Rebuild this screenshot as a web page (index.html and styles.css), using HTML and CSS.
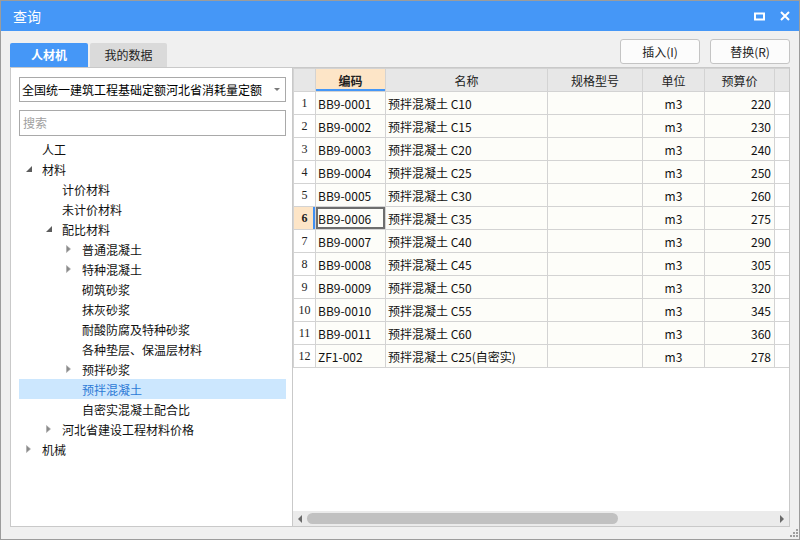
FILE: index.html
```html
<!DOCTYPE html>
<html lang="zh">
<head>
<meta charset="utf-8">
<title>查询</title>
<link rel="stylesheet" href="styles.css">
</head>
<body>
<div class="window">
  <div class="titlebar">
    <span class="title">查询</span>
    <div class="controls">
      <svg class="ic-max" width="11" height="9" viewBox="0 0 11 9"><rect x="1" y="1.5" width="9" height="6" fill="none" stroke="#fff" stroke-width="2"/></svg>
      <svg class="ic-close" width="10" height="10" viewBox="0 0 10 10"><path d="M1 1L9 9M9 1L1 9" stroke="#fff" stroke-width="2"/></svg>
    </div>
  </div>
  <div class="body">
    <div class="toolbar">
      <div class="tabs">
        <div class="tab active">人材机</div>
        <div class="tab">我的数据</div>
      </div>
      <div class="actions">
        <button class="btn">插入(I)</button>
        <button class="btn">替换(R)</button>
      </div>
    </div>
    <div class="main">
      <div class="left">
        <div class="select">
          <span class="select-text">全国统一建筑工程基础定额河北省消耗量定额</span>
          <svg class="select-arrow" width="6" height="3" viewBox="0 0 6 3"><path d="M0 0H6L3 3Z" fill="#7a7a7a"/></svg>
        </div>
        <div class="search">搜索</div>
        <ul class="tree">
          <li class="node lv0"><span class="tw"></span><span class="label">人工</span></li>
          <li class="node lv0"><span class="tw"><svg width="6" height="6" viewBox="0 0 6 6"><path d="M6 0V6H0Z" fill="#5c5c5c"/></svg></span><span class="label">材料</span></li>
          <li class="node lv1"><span class="tw"></span><span class="label">计价材料</span></li>
          <li class="node lv1"><span class="tw"></span><span class="label">未计价材料</span></li>
          <li class="node lv1"><span class="tw"><svg width="6" height="6" viewBox="0 0 6 6"><path d="M6 0V6H0Z" fill="#5c5c5c"/></svg></span><span class="label">配比材料</span></li>
          <li class="node lv2"><span class="tw"><svg width="5" height="8" viewBox="0 0 5 8"><path d="M0.5 0.5L4.5 4L0.5 7.5Z" fill="#8a8a8a" stroke="#a8a8a8" stroke-width="0.6"/></svg></span><span class="label">普通混凝土</span></li>
          <li class="node lv2"><span class="tw"><svg width="5" height="8" viewBox="0 0 5 8"><path d="M0.5 0.5L4.5 4L0.5 7.5Z" fill="#8a8a8a" stroke="#a8a8a8" stroke-width="0.6"/></svg></span><span class="label">特种混凝土</span></li>
          <li class="node lv2"><span class="tw"></span><span class="label">砌筑砂浆</span></li>
          <li class="node lv2"><span class="tw"></span><span class="label">抹灰砂浆</span></li>
          <li class="node lv2"><span class="tw"></span><span class="label">耐酸防腐及特种砂浆</span></li>
          <li class="node lv2"><span class="tw"></span><span class="label">各种垫层、保温层材料</span></li>
          <li class="node lv2"><span class="tw"><svg width="5" height="8" viewBox="0 0 5 8"><path d="M0.5 0.5L4.5 4L0.5 7.5Z" fill="#8a8a8a" stroke="#a8a8a8" stroke-width="0.6"/></svg></span><span class="label">预拌砂浆</span></li>
          <li class="node lv2 selected"><span class="tw"></span><span class="label">预拌混凝土</span></li>
          <li class="node lv2"><span class="tw"></span><span class="label">自密实混凝土配合比</span></li>
          <li class="node lv1"><span class="tw"><svg width="5" height="8" viewBox="0 0 5 8"><path d="M0.5 0.5L4.5 4L0.5 7.5Z" fill="#8a8a8a" stroke="#a8a8a8" stroke-width="0.6"/></svg></span><span class="label">河北省建设工程材料价格</span></li>
          <li class="node lv0"><span class="tw"><svg width="5" height="8" viewBox="0 0 5 8"><path d="M0.5 0.5L4.5 4L0.5 7.5Z" fill="#8a8a8a" stroke="#a8a8a8" stroke-width="0.6"/></svg></span><span class="label">机械</span></li>
        </ul>
      </div>
      <div class="right">
        <div class="grid-wrap">
          <table class="grid">
            <colgroup>
              <col class="c-no"><col class="c-code"><col class="c-name"><col class="c-spec"><col class="c-unit"><col class="c-price"><col class="c-extra">
            </colgroup>
            <thead>
              <tr>
                <th></th><th class="sorted">编码</th><th>名称</th><th>规格型号</th><th>单位</th><th>预算价</th><th></th>
              </tr>
            </thead>
            <tbody>
              <tr><td class="no">1</td><td class="code">BB9-0001</td><td class="name">预拌混凝土 C10</td><td></td><td class="unit">m3</td><td class="price">220</td><td class="extra"></td></tr>
              <tr><td class="no">2</td><td class="code">BB9-0002</td><td class="name">预拌混凝土 C15</td><td></td><td class="unit">m3</td><td class="price">230</td><td class="extra"></td></tr>
              <tr><td class="no">3</td><td class="code">BB9-0003</td><td class="name">预拌混凝土 C20</td><td></td><td class="unit">m3</td><td class="price">240</td><td class="extra"></td></tr>
              <tr><td class="no">4</td><td class="code">BB9-0004</td><td class="name">预拌混凝土 C25</td><td></td><td class="unit">m3</td><td class="price">250</td><td class="extra"></td></tr>
              <tr><td class="no">5</td><td class="code">BB9-0005</td><td class="name">预拌混凝土 C30</td><td></td><td class="unit">m3</td><td class="price">260</td><td class="extra"></td></tr>
              <tr class="current"><td class="no">6</td><td class="code active-cell">BB9-0006</td><td class="name">预拌混凝土 C35</td><td></td><td class="unit">m3</td><td class="price">275</td><td class="extra"></td></tr>
              <tr><td class="no">7</td><td class="code">BB9-0007</td><td class="name">预拌混凝土 C40</td><td></td><td class="unit">m3</td><td class="price">290</td><td class="extra"></td></tr>
              <tr><td class="no">8</td><td class="code">BB9-0008</td><td class="name">预拌混凝土 C45</td><td></td><td class="unit">m3</td><td class="price">305</td><td class="extra"></td></tr>
              <tr><td class="no">9</td><td class="code">BB9-0009</td><td class="name">预拌混凝土 C50</td><td></td><td class="unit">m3</td><td class="price">320</td><td class="extra"></td></tr>
              <tr><td class="no">10</td><td class="code">BB9-0010</td><td class="name">预拌混凝土 C55</td><td></td><td class="unit">m3</td><td class="price">345</td><td class="extra"></td></tr>
              <tr><td class="no">11</td><td class="code">BB9-0011</td><td class="name">预拌混凝土 C60</td><td></td><td class="unit">m3</td><td class="price">360</td><td class="extra"></td></tr>
              <tr><td class="no">12</td><td class="code">ZF1-002</td><td class="name">预拌混凝土 C25(自密实)</td><td></td><td class="unit">m3</td><td class="price">278</td><td class="extra"></td></tr>
            </tbody>
          </table>
        </div>
        <div class="hscroll">
          <span class="sarrow"><svg width="4" height="8" viewBox="0 0 4 8"><path d="M4 0V8L0 4Z" fill="#6a6a6a"/></svg></span>
          <div class="track"><div class="thumb"></div></div>
          <span class="sarrow"><svg width="4" height="8" viewBox="0 0 4 8"><path d="M0 0V8L4 4Z" fill="#6a6a6a"/></svg></span>
        </div>
      </div>
    </div>
    <div class="footer">
      <svg class="grip" width="8" height="8" viewBox="0 0 8 8" fill="#a0a0a0">
        <rect x="6" y="0" width="2" height="2"/>
        <rect x="3" y="3" width="2" height="2"/><rect x="6" y="3" width="2" height="2"/>
        <rect x="0" y="6" width="2" height="2"/><rect x="3" y="6" width="2" height="2"/><rect x="6" y="6" width="2" height="2"/>
      </svg>
    </div>
  </div>
</div>
</body>
</html>
```

FILE: styles.css
```css
* { box-sizing: border-box; }
html, body { margin: 0; padding: 0; }
body {
  font-family: "Noto Sans CJK SC", "Noto Sans", sans-serif;
  font-size: 12px;
  color: #1a1a1a;
  background: #f0f0f0;
}
.window {
  width: 800px;
  height: 540px;
  border: 1px solid #9c9c9c;
  background: #f0f0f0;
  display: flex;
  flex-direction: column;
}
.titlebar {
  height: 30px;
  flex: none;
  background: #4597f7;
  display: flex;
  align-items: center;
  justify-content: space-between;
  padding: 0 9px 0 12px;
}
.title {
  color: #fff;
  font-size: 14px;
  line-height: 30px;
}
.controls {
  display: flex;
  align-items: center;
  gap: 15px;
}
.ic-max { display: block; }
.ic-close { display: block; }
.body {
  flex: 1;
  display: flex;
  flex-direction: column;
  padding: 8px 9px 0 9px;
}
.toolbar {
  height: 28px;
  flex: none;
  display: flex;
  justify-content: space-between;
  align-items: stretch;
}
.tabs {
  display: flex;
  align-items: flex-end;
  gap: 2px;
}
.tab {
  height: 24px;
  line-height: 24px;
  text-align: center;
  background: #dadada;
  color: #1e1e1e;
  border-radius: 2px 2px 0 0;
  font-size: 12px;
  width: 77px;
}
.tab.active {
  width: 78px;
  background: #4597f7;
  color: #fff;
  font-weight: bold;
}
.actions {
  display: flex;
  gap: 10px;
  align-items: flex-start;
}
.btn {
  width: 80px;
  height: 25px;
  padding: 0;
  border: 1px solid #c4c4c4;
  border-radius: 3px;
  background: #fcfcfc;
  font-family: "Noto Sans CJK SC", "Noto Sans", sans-serif;
  font-size: 12px;
  color: #1e1e1e;
}
.main {
  height: 460px;
  flex: none;
  display: flex;
  border: 1px solid #c9c9c9;
  background: #fff;
}
.left {
  width: 282px;
  flex: none;
  border-right: 1px solid #c9c9c9;
  padding: 9px 6px 0 8px;
  background: #fff;
}
.select {
  height: 25px;
  border: 1px solid #a9a9a9;
  display: flex;
  align-items: center;
  justify-content: space-between;
  padding: 0 5px 0 2px;
  color: #000;
}
.select-text { white-space: nowrap; }
.search {
  margin-top: 8px;
  height: 26px;
  border: 1px solid #a9a9a9;
  line-height: 24px;
  padding-left: 3px;
  color: #a0a0a0;
}
.tree {
  list-style: none;
  margin: 3px 0 0 0;
  padding: 0;
}
.node {
  height: 20px;
  display: flex;
  align-items: center;
  color: #111;
  white-space: nowrap;
}
.node.lv0 { padding-left: 3px; }
.node.lv1 { padding-left: 23px; }
.node.lv2 { padding-left: 43px; }
.tw {
  width: 20px;
  flex: none;
  display: flex;
  align-items: center;
  padding-left: 4px;
}
.tw svg { display: block; }
.node.selected {
  background: #cce7fe;
  color: #2c7ad6;
}
.right {
  flex: 1;
  min-width: 0;
  display: flex;
  flex-direction: column;
  background: #fff;
}
.grid-wrap {
  flex: 1;
  overflow: hidden;
}
.grid {
  border-collapse: collapse;
  table-layout: fixed;
  width: 530px;
  font-size: 12px;
}
.c-no { width: 22px; }
.c-code { width: 70px; }
.c-name { width: 162px; }
.c-spec { width: 95px; }
.c-unit { width: 62px; }
.c-price { width: 70px; }
.c-extra { width: 49px; }
.grid th, .grid td {
  border: 1px solid #d3d3d3;
  height: 23px;
  padding: 0 2px;
  white-space: nowrap;
  overflow: hidden;
}
.grid th {
  background: #e7e7e7;
  font-weight: normal;
  color: #222;
  text-align: center;
}
.grid th.sorted {
  background: #fde5c7;
  font-weight: bold;
  box-shadow: inset 0 -2px 0 #4597f7;
}
.grid td {
  background: #fdfdf9;
  color: #111;
}
.grid td.no {
  background: #fff;
  text-align: center;
  font-family: "Liberation Serif", "DejaVu Serif", serif;
  font-size: 12px;
  color: #222;
  padding: 0;
}
.grid td.extra { background: #fff; }
.grid td.code { padding-left: 2px; }
.grid td.unit { text-align: center; }
.grid td.price { text-align: right; padding-right: 3px; }
.grid tr.current td.no {
  background: #fde5c7;
  font-weight: bold;
  box-shadow: inset -2px 0 0 #3f8ff3;
}
.grid td.active-cell {
  box-shadow: inset 0 0 0 2px #6e6e6e;
}
.hscroll {
  height: 15px;
  flex: none;
  display: flex;
  align-items: center;
  background: #ebebeb;
}
.sarrow {
  width: 14px;
  flex: none;
  display: flex;
  justify-content: center;
  align-items: center;
}
.sarrow svg { display: block; }
.track {
  flex: 1;
  height: 11px;
  display: flex;
  align-items: center;
}
.thumb {
  width: 311px;
  height: 11px;
  border-radius: 6px;
  background: #c1c1c1;
}
.footer {
  height: 12px;
  flex: none;
  display: flex;
  justify-content: flex-end;
  align-items: flex-end;
  margin-right: -8px;
  padding-bottom: 2px;
}
.grip { display: block; }
```
